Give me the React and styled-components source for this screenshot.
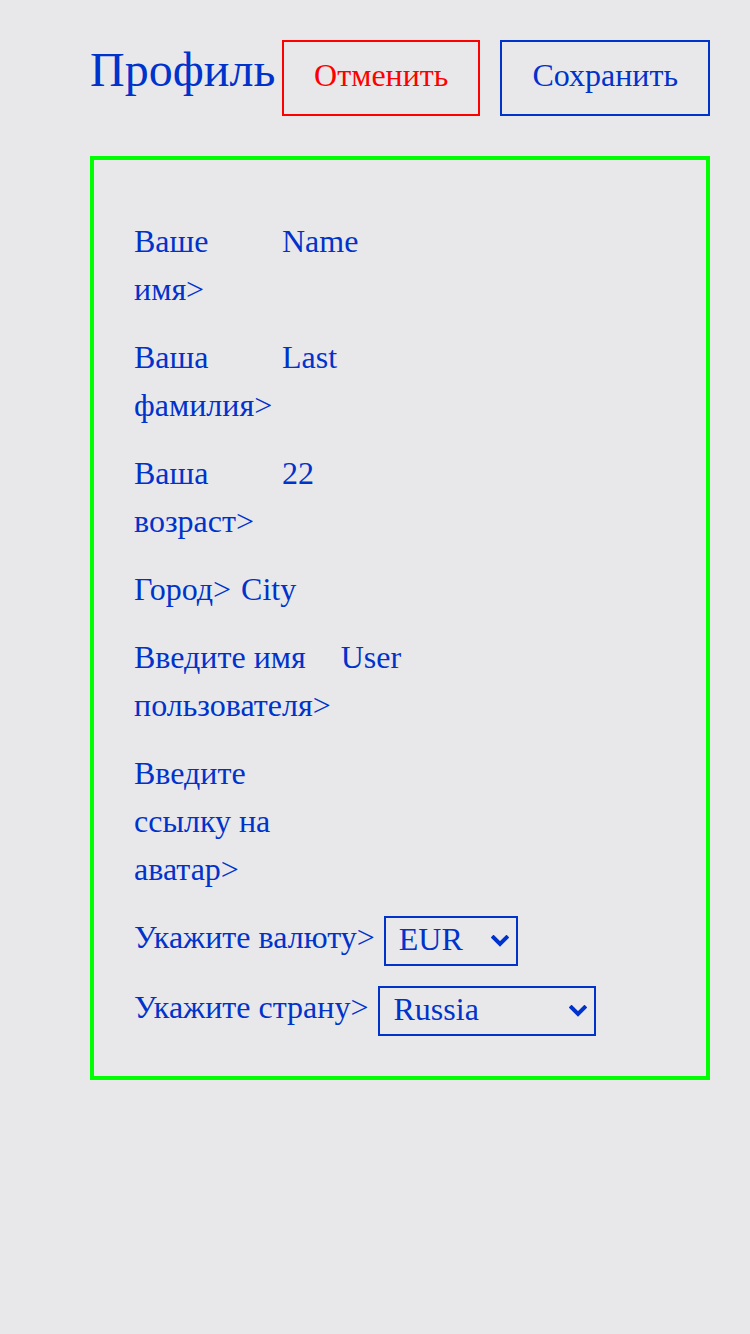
import React from "react";
import styled, { createGlobalStyle } from "styled-components";

const Global = createGlobalStyle`
  html, body { margin: 0; padding: 0; background: #e8e8ea; }
  body { font-family: "Liberation Serif", "Times New Roman", serif; color: #0033cc; }
`;

const Page = styled.div`
  padding: 40px 40px 40px 90px;
  display: flex;
  flex-direction: column;
  gap: 40px;
`;

const Header = styled.header`
  display: flex;
  justify-content: space-between;
  align-items: flex-start;
`;

const Title = styled.h1`
  margin: 0;
  font-weight: normal;
  font-size: 48px;
  line-height: 60px;
  color: #0033cc;
`;

const Actions = styled.div`
  display: flex;
  gap: 20px;
`;

const Button = styled.button`
  font-family: "Liberation Serif", "Times New Roman", serif;
  font-size: 32px;
  line-height: 36px;
  padding: 15px 30px 21px;
  background: transparent;
  border: 2px solid ${(p) => p.$color};
  color: ${(p) => p.$color};
  cursor: pointer;
`;

const Form = styled.form`
  border: 4px solid #00ff00;
  padding: 57px 40px 43px 40px;
  display: flex;
  flex-direction: column;
  gap: 20px;
`;

const Row = styled.div`
  display: flex;
  gap: ${(p) => p.$gap || "10px"};
  align-items: flex-start;
  font-size: 32px;
  line-height: 48px;
`;

const Label = styled.label`
  width: ${(p) => p.$w || "min-content"};
  flex-shrink: 0;
`;

const Value = styled.span``;

const SelectWrap = styled.div`
  position: relative;
  margin-top: 3px;
  margin-bottom: -3px;
  width: ${(p) => p.$w};
  height: 50px;
`;

const Select = styled.select`
  display: block;
  appearance: none;
  -webkit-appearance: none;
  box-sizing: border-box;
  width: 100%;
  height: 50px;
  margin: 0;
  font-family: "Liberation Serif", "Times New Roman", serif;
  font-size: 32px;
  color: #0033cc;
  background: transparent;
  border: 2px solid #0033cc;
  border-radius: 0;
  padding: 0 40px 4px 13px;
  outline: none;
`;

const Chevron = styled.svg`
  position: absolute;
  right: 9px;
  top: 19px;
  width: 18px;
  height: 12px;
  pointer-events: none;
`;

const rows = [
  { label: "Ваше имя>", value: "Name", w: "138px" },
  { label: "Ваша фамилия>", value: "Last", w: "138px" },
  { label: "Ваша возраст>", value: "22", w: "138px" },
  { label: "Город>", value: "City" },
  { label: "Введите имя пользователя>", value: "User" },
  { label: "Введите ссылку на аватар>", value: "", w: "140px" },
];

function Dropdown({ w, value, options }) {
  return (
    <SelectWrap $w={w}>
      <Select defaultValue={value}>
        {options.map((o) => (
          <option key={o}>{o}</option>
        ))}
      </Select>
      <Chevron viewBox="0 0 18 12">
        <polyline
          points="2.5,2.5 9,9 15.5,2.5"
          fill="none"
          stroke="#0033cc"
          strokeWidth="4"
          strokeLinecap="square"
        />
      </Chevron>
    </SelectWrap>
  );
}

export default function App() {
  return (
    <>
      <Global />
      <Page>
        <Header>
          <Title>Профиль</Title>
          <Actions>
            <Button $color="#ff0000">Отменить</Button>
            <Button $color="#0033cc">Сохранить</Button>
          </Actions>
        </Header>
        <Form onSubmit={(e) => e.preventDefault()}>
          {rows.map((r) => (
            <Row key={r.label}>
              <Label $w={r.w}>{r.label}</Label>
              <Value>{r.value}</Value>
            </Row>
          ))}
          <Row $gap="9px">
            <Label>Укажите&nbsp;валюту&gt;</Label>
            <Dropdown w="134px" value="EUR" options={["EUR", "USD", "RUB"]} />
          </Row>
          <Row>
            <Label>Укажите&nbsp;страну&gt;</Label>
            <Dropdown w="218px" value="Russia" options={["Russia", "Germany", "USA"]} />
          </Row>
        </Form>
      </Page>
    </>
  );
}
